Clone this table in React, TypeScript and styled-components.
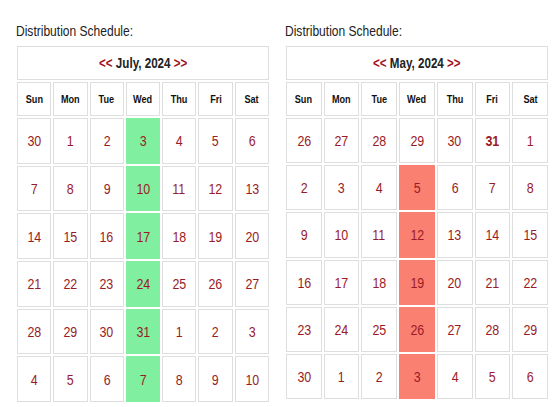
import { createGlobalStyle, styled } from 'styled-components';

const GlobalStyle = createGlobalStyle`
  * { box-sizing: border-box; }
  body {
    margin: 0;
    background: #ffffff;
    font-family: "Liberation Sans", Arial, sans-serif;
  }
`;

const WEEKDAYS = ['Sun', 'Mon', 'Tue', 'Wed', 'Thu', 'Fri', 'Sat'];

interface ICalendar {
  id: string;
  month: string;
  width: number;
  rowHeight: number;
  highlight: 'green' | 'red';
  highlightRows: number[];
  boldDay?: [number, number];
  weeks: number[][];
}

const calendars: ICalendar[] = [
  {
    id: 'july',
    month: 'July, 2024',
    width: 252,
    rowHeight: 45.7,
    highlight: 'green',
    highlightRows: [0, 1, 2, 3, 4, 5],
    weeks: [
      [30, 1, 2, 3, 4, 5, 6],
      [7, 8, 9, 10, 11, 12, 13],
      [14, 15, 16, 17, 18, 19, 20],
      [21, 22, 23, 24, 25, 26, 27],
      [28, 29, 30, 31, 1, 2, 3],
      [4, 5, 6, 7, 8, 9, 10]
    ]
  },
  {
    id: 'may',
    month: 'May, 2024',
    width: 262,
    rowHeight: 45.2,
    highlight: 'red',
    highlightRows: [1, 2, 3, 4, 5],
    boldDay: [0, 5],
    weeks: [
      [26, 27, 28, 29, 30, 31, 1],
      [2, 3, 4, 5, 6, 7, 8],
      [9, 10, 11, 12, 13, 14, 15],
      [16, 17, 18, 19, 20, 21, 22],
      [23, 24, 25, 26, 27, 28, 29],
      [30, 1, 2, 3, 4, 5, 6]
    ]
  }
];

const HIGHLIGHT = {
  green: '#80f0a0',
  red: '#fa8072'
};

const App = () => {
  return (
    <Page>
      <GlobalStyle />
      {calendars.map((cal) => (
        <Schedule key={cal.id} $width={cal.width}>
          <Title>Distribution Schedule:</Title>
          <Grid $rowHeight={cal.rowHeight}>
            <MonthCell>
              <Label>
                <Arrow>&lt;&lt;</Arrow>
                {` ${cal.month} `}
                <Arrow>&gt;&gt;</Arrow>
              </Label>
            </MonthCell>
            {WEEKDAYS.map((day) => (
              <DayName key={day}>
                <Label>{day}</Label>
              </DayName>
            ))}
            {cal.weeks.map((week, r) =>
              week.map((num, c) => {
                const marked = c === 3 && cal.highlightRows.includes(r);
                const bold = cal.boldDay?.[0] === r && cal.boldDay?.[1] === c;
                return (
                  <DayCell
                    key={`${r}-${c}`}
                    $bg={marked ? HIGHLIGHT[cal.highlight] : undefined}
                    $bold={bold}
                  >
                    <Label>{num}</Label>
                  </DayCell>
                );
              })
            )}
          </Grid>
        </Schedule>
      ))}
    </Page>
  );
};

const Page = styled.div`
  display: flex;
  align-items: flex-start;
  gap: 17px;
  padding: 23px 0 0 17px;
`;

const Schedule = styled.div<{ $width: number }>`
  display: flex;
  flex-direction: column;
  gap: 7px;
  width: ${(p) => p.$width}px;
`;

// the screenshot text is narrower than Arial, so squeeze it sideways
const Title = styled.div`
  font-size: 14.5px;
  line-height: 16px;
  color: #222;
  margin-left: -1px;
  white-space: nowrap;
  transform: scaleX(0.83);
  transform-origin: left center;
`;

const Label = styled.span`
  display: inline-block;
  white-space: pre;
  transform: scaleX(0.83);
`;

const Grid = styled.div<{ $rowHeight: number }>`
  display: grid;
  grid-template-columns: repeat(7, 1fr);
  grid-template-rows: 34px 34px repeat(6, ${(p) => p.$rowHeight}px);
  gap: 2px;
`;

const Cell = styled.div`
  display: flex;
  align-items: center;
  justify-content: center;
  border: 1px solid #dedede;
  background: #ffffff;
`;

const MonthCell = styled(Cell)`
  grid-column: 1 / -1;
  font-size: 14px;
  font-weight: bold;
  color: #222;
`;

const Arrow = styled.span`
  color: #a0121e;
`;

const DayName = styled(Cell)`
  font-size: 11px;
  font-weight: bold;
  color: #111;
`;

const DayCell = styled(Cell)<{ $bg?: string; $bold?: boolean }>`
  font-size: 15px;
  font-weight: ${(p) => (p.$bold ? 'bold' : 'normal')};
  color: #9a1b26;
  background: ${(p) => p.$bg ?? '#ffffff'};
  border-color: ${(p) => p.$bg ?? '#dedede'};
`;

export default App;
